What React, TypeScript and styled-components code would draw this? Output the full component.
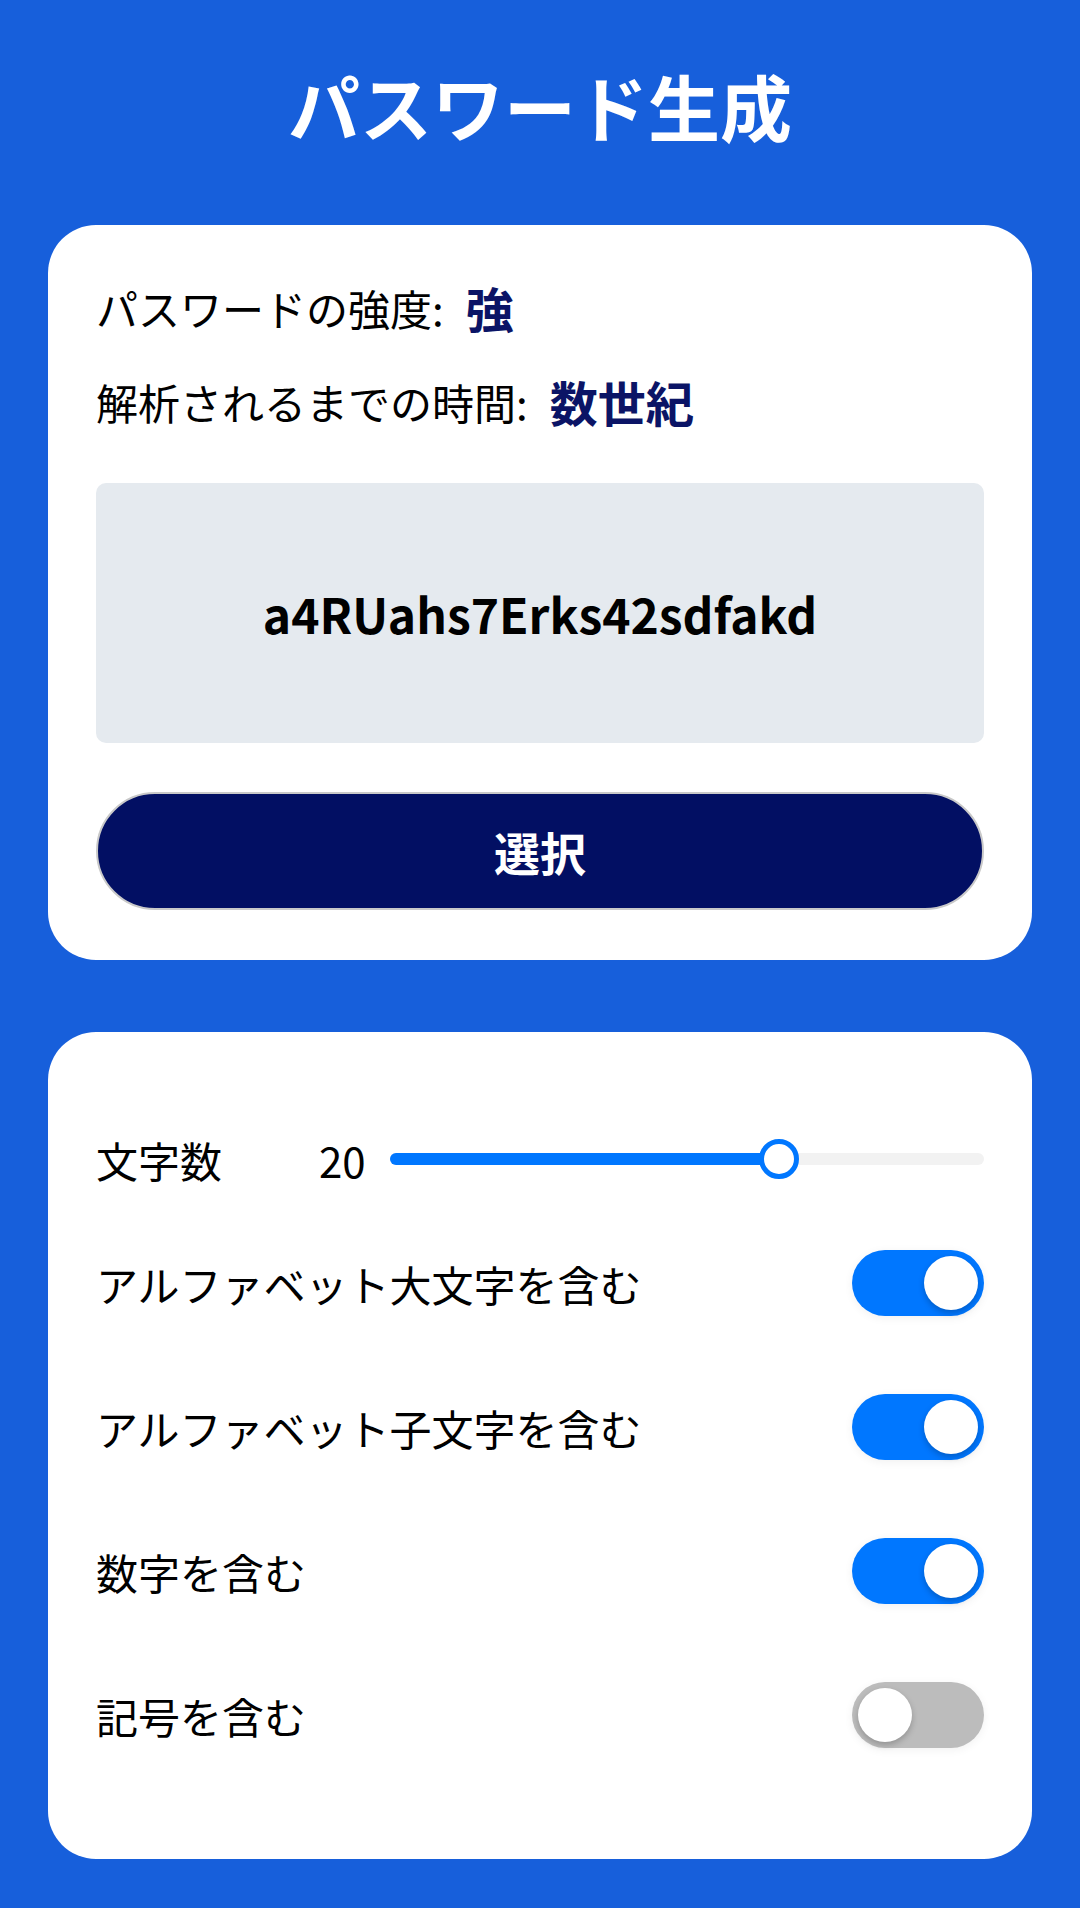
import React, { useState } from 'react';
import styled, { createGlobalStyle } from 'styled-components';

const GlobalStyle = createGlobalStyle`
	html,
	body {
		margin: 0;
		padding: 0;
	}

	body {
		background-color: #175fdb;
		font-family: 'Noto Sans CJK JP', 'Noto Sans', sans-serif;
		color: #000;
	}
`;

const Page = styled.div`
	display: flex;
	flex-direction: column;
	width: 1080px;
	min-height: 1908px;
	box-sizing: border-box;
	padding: 0 48px 49px;
	background-color: #175fdb;
`;

const Title = styled.h1`
	display: flex;
	justify-content: center;
	align-items: center;
	height: 225px;
	margin: 0;
	padding-bottom: 16px;
	box-sizing: border-box;
	font-size: 72px;
	font-weight: 700;
	line-height: 1;
	color: #fff;
`;

const Card = styled.section<{ $gap?: number }>`
	display: flex;
	flex-direction: column;
	margin-top: ${({ $gap }) => $gap ?? 0}px;
	background-color: #fff;
	border-radius: 48px;
`;

const ResultCard = styled(Card)`
	padding: 52px 48px 50px;
`;

const SettingsCard = styled(Card)`
	padding: 75px 48px 72px;
`;

const StatusRow = styled.div<{ $space?: number }>`
	display: flex;
	align-items: center;
	height: 60px;
	margin-top: ${({ $space }) => $space ?? 0}px;
	font-size: 42px;
`;

const StatusValue = styled.span`
	margin-left: 22px;
	font-size: 48px;
	font-weight: 700;
	color: #0b1466;
`;

const PasswordBox = styled.div`
	display: flex;
	justify-content: center;
	align-items: center;
	height: 260px;
	margin-top: 52px;
	border-radius: 10px;
	background-color: #e5eaef;
	font-size: 48px;
	font-weight: 700;
	color: #000;
`;

const SelectButton = styled.button`
	height: 118px;
	margin-top: 49px;
	box-sizing: border-box;
	border: 2px solid #c9c9c9;
	border-radius: 59px;
	background-color: #020f63;
	font-family: inherit;
	font-size: 46px;
	font-weight: 700;
	color: #fff;
	cursor: pointer;
`;

const SliderRow = styled.div`
	display: flex;
	align-items: center;
	height: 104px;
`;

const SliderLabel = styled.span`
	width: 223px;
	font-size: 42px;
`;

const SliderValue = styled.span`
	width: 48px;
	font-size: 42px;
`;

const Track = styled.div`
	position: relative;
	flex: 1;
	height: 12px;
	margin-left: 23px;
	border-radius: 6px;
	background-color: #f2f2f2;
`;

const TrackFill = styled.div`
	height: 100%;
	border-radius: 6px;
	background-color: #0077ff;
`;

const Thumb = styled.div`
	position: absolute;
	top: 50%;
	width: 40px;
	height: 40px;
	box-sizing: border-box;
	border: 5px solid #0077ff;
	border-radius: 50%;
	background-color: #fff;
	transform: translate(-50%, -50%);
`;

const OptionRow = styled.label`
	display: flex;
	justify-content: space-between;
	align-items: center;
	height: 144px;
	font-size: 42px;
	cursor: pointer;
`;

const Switch = styled.button<{ $on: boolean }>`
	display: flex;
	justify-content: ${({ $on }) => ($on ? 'flex-end' : 'flex-start')};
	align-items: center;
	width: 132px;
	height: 66px;
	padding: 0 6px;
	box-sizing: border-box;
	border: none;
	border-radius: 33px;
	background-color: ${({ $on }) => ($on ? '#0077ff' : '#bcbcbc')};
	box-shadow: 0 2px 10px rgba(0, 0, 0, 0.06);
	cursor: pointer;
`;

const Knob = styled.span`
	width: 54px;
	height: 54px;
	border-radius: 50%;
	background-color: #fff;
	box-shadow: 0 3px 6px rgba(0, 0, 0, 0.22);
`;

const MIN_LENGTH = 0;
const MAX_LENGTH = 30;

const App = () => {
	const [length] = useState<number>(20);
	const [options, setOptions] = useState([
		{ label: 'アルファベット大文字を含む', on: true },
		{ label: 'アルファベット子文字を含む', on: true },
		{ label: '数字を含む', on: true },
		{ label: '記号を含む', on: false },
	]);

	const ratio = (length - MIN_LENGTH) / (MAX_LENGTH - MIN_LENGTH);
	const thumbPos = `calc(20px + (100% - 40px) * ${ratio})`;

	const toggle = (index: number) =>
		setOptions((prev) =>
			prev.map((o, i) => (i === index ? { ...o, on: !o.on } : o))
		);

	return (
		<>
			<GlobalStyle />
			<Page>
				<Title>パスワード生成</Title>

				<ResultCard>
					<StatusRow>
						パスワードの強度:<StatusValue>強</StatusValue>
					</StatusRow>
					<StatusRow $space={34}>
						解析されるまでの時間:<StatusValue>数世紀</StatusValue>
					</StatusRow>
					<PasswordBox>a4RUahs7Erks42sdfakd</PasswordBox>
					<SelectButton>選択</SelectButton>
				</ResultCard>

				<SettingsCard $gap={72}>
					<SliderRow>
						<SliderLabel>文字数</SliderLabel>
						<SliderValue>{length}</SliderValue>
						<Track>
							<TrackFill style={{ width: thumbPos }} />
							<Thumb style={{ left: thumbPos }} />
						</Track>
					</SliderRow>
					{options.map((o, i) => (
						<OptionRow key={o.label}>
							{o.label}
							<Switch $on={o.on} onClick={() => toggle(i)}>
								<Knob />
							</Switch>
						</OptionRow>
					))}
				</SettingsCard>
			</Page>
		</>
	);
};

export default App;
